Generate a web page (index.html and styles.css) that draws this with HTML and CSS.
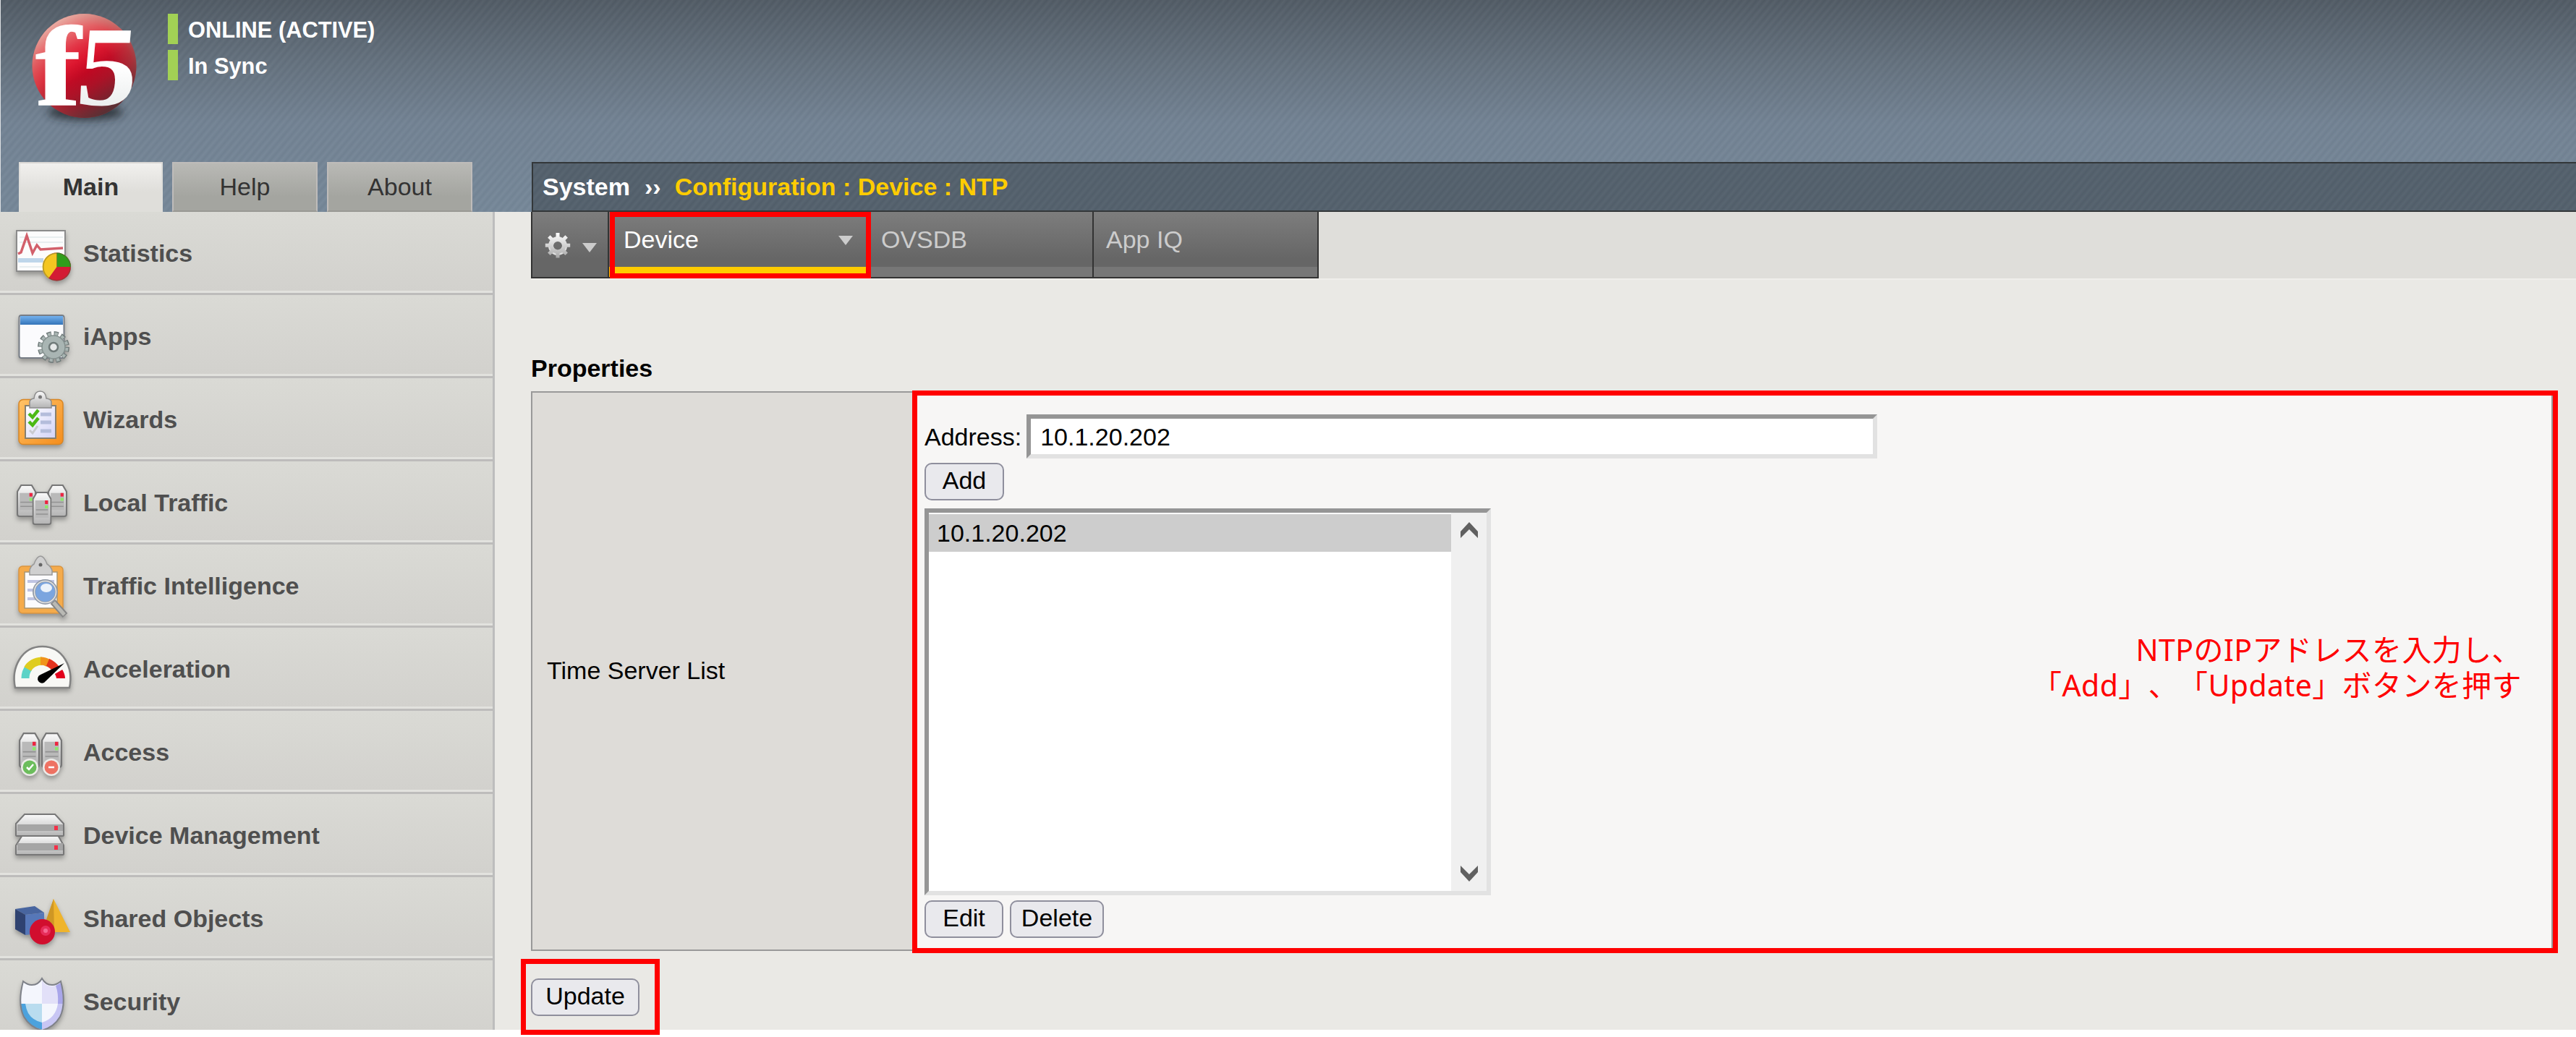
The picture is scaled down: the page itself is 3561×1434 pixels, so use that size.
FILE: index.html
```html
<!DOCTYPE html>
<html lang="ja">
<head>
<meta charset="utf-8">
<title>NTP Configuration</title>
<link rel="stylesheet" href="styles.css">
</head>
<body>
<svg class="defs" width="0" height="0" aria-hidden="true">
  <defs>
    <linearGradient id="metal" x1="0" y1="0" x2="0" y2="1"><stop offset="0" stop-color="#fafafa"/><stop offset="1" stop-color="#b4b4b4"/></linearGradient>
    <linearGradient id="orange" x1="0" y1="0" x2="1" y2="1"><stop offset="0" stop-color="#ffc368"/><stop offset="1" stop-color="#f58d1c"/></linearGradient>
    <linearGradient id="paper" x1="0" y1="0" x2="1" y2="1"><stop offset="0" stop-color="#fff"/><stop offset="1" stop-color="#d2d3f7"/></linearGradient>
    <linearGradient id="blue" x1="0" y1="0" x2="0" y2="1"><stop offset="0" stop-color="#73b1ee"/><stop offset="1" stop-color="#3474b8"/></linearGradient>
    <symbol id="tower" viewBox="0 0 26 46" preserveAspectRatio="none">
      <path d="M1 10 6 1H20L25 10V42Q25 45 22 45H4Q1 45 1 42Z" fill="url(#metal)" stroke="#777" stroke-width="2"/>
      <path d="M4 12h18v24H4z" fill="#b9b9b9"/><path d="M5 25h16M5 31h16" stroke="#929292" stroke-width="1.5"/>
      <path d="M17 12h4v5h-4z" fill="#ed2440"/><path d="M17 19h4v4h-4z" fill="#8be86a"/>
    </symbol>
  </defs>
</svg>
<div class="page">
  <header class="top">
    <div class="brand">
      <svg class="logo" width="232" height="190" viewBox="0 0 232 190">
        <defs>
          <radialGradient id="ball" cx="116" cy="104" r="84" fx="122" fy="100" gradientUnits="userSpaceOnUse"><stop offset="0" stop-color="#d9001f"/><stop offset=".5" stop-color="#d80724"/><stop offset=".82" stop-color="#d32f3c"/><stop offset="1" stop-color="#b06360"/></radialGradient>
          <linearGradient id="shine" x1="70" y1="20" x2="120" y2="100" gradientUnits="userSpaceOnUse"><stop offset="0" stop-color="#ffd9cc" stop-opacity=".85"/><stop offset="1" stop-color="#e55" stop-opacity="0"/></linearGradient>
          <linearGradient id="shade" x1="105" y1="85" x2="150" y2="160" gradientUnits="userSpaceOnUse"><stop offset="0" stop-color="#333" stop-opacity="0"/><stop offset=".45" stop-color="#433" stop-opacity=".3"/><stop offset="1" stop-color="#343434" stop-opacity=".85"/></linearGradient>
          <linearGradient id="glyph" x1="0" y1="0" x2="0" y2="1"><stop offset=".5" stop-color="#fff"/><stop offset="1" stop-color="#dfe4e4"/></linearGradient>
          <filter id="soft" x="-30%" y="-80%" width="160%" height="260%"><feGaussianBlur stdDeviation="6"/></filter>
        </defs>
        <ellipse cx="118" cy="155" rx="52" ry="11" fill="#20262c" opacity=".8" filter="url(#soft)"/>
        <circle cx="116.500" cy="91" r="72" fill="url(#ball)"/>
        <circle cx="116.500" cy="91" r="72" fill="url(#shade)"/>
        <circle cx="116.500" cy="91" r="72" fill="url(#shine)"/>
        <text class="logo-f" transform="translate(49 144.500) scale(1.2 1)">f</text>
        <text class="logo-5" transform="translate(103 144.500) skewX(-5) scale(1.06 1)">5</text>
      </svg>
      <div class="status">
        <div class="status-row">ONLINE (ACTIVE)</div>
        <div class="status-row">In Sync</div>
      </div>
    </div>
    <div class="bar">
      <nav class="tabs">
        <a class="tab tab-on">Main</a>
        <a class="tab">Help</a>
        <a class="tab">About</a>
      </nav>
      <div class="crumbs"><span class="crumb-root">System</span><span class="crumb-sep">››</span><span class="crumb-path">Configuration : Device : NTP</span></div>
    </div>
  </header>

  <div class="body">
    <aside class="menu">
      <a class="item"><svg class="icon" viewBox="0 0 114 110">
        <path d="M23 25h67v56H23z" fill="#fcfcfc" stroke="#8b8b8b" stroke-width="2"/><path d="M25 63h35v6H25z" fill="#bed6ea"/>
        <path d="M27 34h60M27 41h60M27 75h33" stroke="#e8eef0" stroke-width="2"/>
        <path d="m25 57 4-2 8-23 8 24 6-11 5 6 31-2" fill="none" stroke="#d2606b" stroke-width="3.500"/>
        <circle cx="78.500" cy="75" r="19.500" fill="#d31c34"/><path d="M78.500 75V55.500A19.500 19.500 0 0 0 67 91Z" fill="#f4c621"/><path d="M78.500 75V55.500A19.500 19.500 0 0 1 98 75Z" fill="#309e1b"/>
        <circle cx="78.500" cy="75" r="18.800" fill="none" stroke="#553" stroke-opacity=".4" stroke-width="1.500"/>
      </svg>Statistics</a>
      <a class="item"><svg class="icon" viewBox="0 0 114 110">
        <rect x="26.500" y="27" width="62" height="59" rx="3" fill="#fbfbfd" stroke="#777d86" stroke-width="2"/><path d="M28 28h59v12H28z" fill="url(#blue)"/>
        <circle cx="74" cy="71" r="18.500" fill="none" stroke="#6f7a79" stroke-width="7" stroke-dasharray="6 3.690"/><circle cx="74" cy="71" r="17.500" fill="none" stroke="#a9b5b3" stroke-width="6" stroke-dasharray="4 5.163" stroke-dashoffset="-1"/>
        <circle cx="74" cy="71" r="16" fill="#a9b5b3" stroke="#84908e" stroke-width="1.500"/><circle cx="74" cy="71" r="6" fill="#e6e9e9" stroke="#6f7a79" stroke-width="2.500"/>
      </svg>iApps</a>
      <a class="item"><svg class="icon" viewBox="0 0 114 110">
        <rect x="26" y="28.500" width="61" height="62" rx="6" fill="url(#orange)" stroke="#d88624" stroke-width="1.500"/><path d="M35 37h42v45H35z" fill="url(#paper)" stroke="#87806f" stroke-width="2"/>
        <path d="M41 40V32q0-4 6-5 1-10 8.500-10T64 27q7 1 7 5v8z" fill="url(#metal)" stroke="#8c8c8c" stroke-width="1.500"/><circle cx="55.500" cy="25" r="2.500" fill="#777"/>
        <path d="m40 48 5 5 8-10M40 59l5 5 8-10" fill="none" stroke="#4cb916" stroke-width="4.500"/><path d="m41 71 4 4 7-10" fill="none" stroke="#c9cad0" stroke-width="3"/><path d="M56 49h15M56 60h15M56 72h15" stroke="#b4bddb" stroke-width="5"/>
      </svg>Wizards</a>
      <a class="item"><svg class="icon" viewBox="0 0 114 110">
        <use href="#tower" x="23" y="31" width="27" height="45"/><use href="#tower" x="66" y="31" width="27" height="45"/><use href="#tower" x="44.500" y="41" width="27" height="46"/>
      </svg>Local Traffic</a>
      <a class="item"><svg class="icon" viewBox="0 0 114 110">
        <rect x="26" y="29" width="61" height="65" rx="5" fill="#f5ab4b" stroke="#d99541" stroke-width="1.500"/><path d="M34 37h45v50H34z" fill="#fbfbfd" stroke="#a99672" stroke-width="1.500"/>
        <path d="M38 50h37M38 62h37M38 74h37" stroke="#bfc4e2" stroke-width="4"/>
        <path d="M41 41V35q1-6 6-9 4-11 9-11t9 11q5 3 7 9v6z" fill="#d0d0d0" stroke="#999" stroke-width="1.500"/><circle cx="56" cy="27" r="2.500" fill="#666"/>
        <path d="m73 78 17 19" stroke="#858585" stroke-width="9"/><path d="m74 79 15 17" stroke="#b9b9b4" stroke-width="5"/>
        <circle cx="62.500" cy="64.500" r="15.500" fill="#7ba5df" stroke="#929aa6" stroke-width="4"/><circle cx="62.500" cy="64.500" r="15" fill="none" stroke="#e4e4e4" stroke-width="1.500"/><ellipse cx="64" cy="59" rx="8" ry="6" fill="#fff" opacity=".85"/>
      </svg>Traffic Intelligence</a>
      <a class="item"><svg class="icon" viewBox="0 0 114 110">
        <path d="M21 82C15 54 30 25 58.500 25S102 54 96 82Z" fill="#f8f8f5" stroke="#838383" stroke-width="2.500"/>
        <path d="M35 69Q35 60 40 54" fill="none" stroke="#5dd3c7" stroke-width="11"/><path d="M38 56Q44 46 58 45" fill="none" stroke="#dfcc1f" stroke-width="11"/><path d="M56 45Q62 45 67 48" fill="none" stroke="#f0931b" stroke-width="11"/><path d="M66 47Q73 50 78 57" fill="none" stroke="#e2321c" stroke-width="11"/><path d="M81 60Q84 65 84 69" fill="none" stroke="#e2001c" stroke-width="12"/>
        <path d="M89 48 63 73a6 6 0 1 1-7-9Z" fill="#000"/>
      </svg>Acceleration</a>
      <a class="item"><svg class="icon" viewBox="0 0 114 110">
        <use href="#tower" x="26" y="29" width="29" height="49"/><use href="#tower" x="57" y="29" width="29" height="49"/>
        <circle cx="41" cy="77" r="12" fill="#ecebe8"/><circle cx="71" cy="77" r="12" fill="#ecebe8"/><circle cx="41" cy="77" r="9.500" fill="#6cbd5c"/><circle cx="71" cy="77" r="9.500" fill="#ee7263"/>
        <path d="m37 77 3 3 6-7M67 77h8" fill="none" stroke="#fff" stroke-width="2.500"/>
      </svg>Access</a>
      <a class="item"><svg class="icon" viewBox="0 0 114 110">
        <path d="m22 70 9-14h49l8 14v12q0 1-2 1H24q-2 0-2-1z" fill="url(#metal)" stroke="#777" stroke-width="2"/><path d="m22 40 12-13h42l12 13v16q0 1-2 1H24q-2 0-2-1z" fill="url(#metal)" stroke="#777" stroke-width="2"/>
        <path d="M24 41h63v9H24zM24 67h63v10H24z" fill="#a5a5a5"/><path d="M75 43h5v6h-5zM75 70h5v6h-5z" fill="#f33048"/>
      </svg>Device Management</a>
      <a class="item"><svg class="icon" viewBox="0 0 114 110">
        <path d="m74 29 23 46H60z" fill="#efb42c"/><path d="m74 29 1 46H58z" fill="#cf9724"/>
        <path d="m21 43 27-4 13 9-26 3z" fill="#48659f"/><path d="m21 43 14 8v28L21 71z" fill="#2f4270"/><path d="m35 51 26-3v28l-26 3z" fill="#5677b8"/>
        <circle cx="58.500" cy="74.500" r="17.500" fill="#d10e2e"/><circle cx="63" cy="73" r="7" fill="#ef3a6d" opacity=".7"/><circle cx="63" cy="73" r="3" fill="#fa77a0" opacity=".8"/>
      </svg>Shared Objects</a>
      <a class="item"><svg class="icon" viewBox="0 0 114 110">
        <path d="M58 24q5 9 14 9 6 0 12-5 8 31-1 49-8 14-25 19Q41 91 33 77q-9-18-1-49 6 5 12 5 9 0 14-9z" fill="#f4f6fd"/>
        <path d="M58 59v36Q41 91 33 77q-4-8-4-18z" fill="#4ca2dd"/><path d="M58 59v26Q45 82 39 72q-3-6-4-13z" fill="#b9dcef"/>
        <path d="M58 27q5 8 14 8l5-1q5 12 4 25H58z" fill="#e2e0f8"/><path d="m77 34 7-4q4 17 3 29h-7q1-14-3-25z" fill="#a9a6ea"/><path d="M87 59q0 10-4 18-8 14-25 18V85Q77 79 80 59z" fill="#c8c6f4"/>
        <path d="M58 24q5 9 14 9 6 0 12-5 8 31-1 49-8 14-25 19Q41 91 33 77q-9-18-1-49 6 5 12 5 9 0 14-9z" fill="none" stroke="#7e8189" stroke-width="2"/>
      </svg>Security</a>
    </aside>

    <main class="content">
      <div class="strip">
        <div class="strip-gear">
          <svg width="46" height="50" viewBox="0 0 46 50"><defs><linearGradient id="gear" x1="0" y1="0" x2="0" y2="1"><stop offset="0" stop-color="#fff"/><stop offset="1" stop-color="#a8a8a8"/></linearGradient></defs>
            <circle cx="23" cy="25" r="9.500" fill="none" stroke="#dedede" stroke-width="7"/>
            <path fill="url(#gear)" fill-rule="evenodd" d="M20.500 7h5v6l3.700 1.500 4.200-4.200 3.500 3.500-4.200 4.200 1.500 3.700h6v5h-6l-1.500 3.700 4.200 4.200-3.500 3.500-4.200-4.200-3.700 1.500v6h-5v-6l-3.700-1.500-4.200 4.200-3.500-3.500 4.200-4.200-1.500-3.700h-6v-5h6l1.500-3.700-4.200-4.200 3.500-3.500 4.200 4.200 3.700-1.500zM23 18a6.200 6.200 0 1 0 .01 0z"/></svg>
          <i class="caret"></i>
        </div>
        <div class="strip-tab strip-on">Device<i class="caret"></i></div>
        <div class="strip-tab">OVSDB</div>
        <div class="strip-tab">App IQ</div>
      </div>

      <h1 class="heading">Properties</h1>
      <section class="panel">
        <div class="panel-label">Time Server List</div>
        <div class="panel-fields">
          <div class="address">Address:<span class="field">10.1.20.202</span></div>
          <button class="btn btn-add">Add</button>
          <div class="list">
            <div class="options"><div class="option">10.1.20.202</div></div>
            <div class="scroll">
              <svg width="26" height="28" viewBox="0 0 26 28"><path d="M1 17 13 4l12 13v9L13 14 1 26z" fill="#606060"/></svg>
              <svg width="26" height="28" viewBox="0 0 26 28"><path d="M1 11 13 24l12-13V2L13 14 1 2z" fill="#606060"/></svg>
            </div>
          </div>
          <div class="actions"><button class="btn btn-edit">Edit</button><button class="btn btn-delete">Delete</button></div>
        </div>
      </section>
      <button class="btn btn-update">Update</button>
    </main>
  </div>
</div>
<div class="mark mark-tab"></div>
<div class="mark mark-panel"><p class="note">NTPのIPアドレスを入力し、<br>「Add」、「Update」ボタンを押す</p></div>
<div class="mark mark-update"></div>
</body>
</html>
```
FILE: styles.css
```css
* { box-sizing: border-box; }

body {
  margin: 0;
  width: 3561px;
  height: 1434px;
  position: relative;
  overflow: hidden;
  background: #fff;
  color: #000;
  font: 34px/40px "Liberation Sans", Arial, sans-serif;
}

.defs { position: absolute; }

.page {
  height: 1424px;
  overflow: hidden;
  display: flex;
  flex-direction: column;
  background: #eae9e5;
}

/* Header */
.top {
  height: 293px;
  flex: none;
  display: flex;
  flex-direction: column;
  justify-content: space-between;
  background:
    repeating-linear-gradient(130deg, rgba(255, 255, 255, .035) 0, rgba(0, 0, 0, .025) 4px, rgba(255, 255, 255, .035) 8px),
    linear-gradient(#515b65, #64717e 30%, #728293 58%, #758798);
  border-left: 1px solid #dde0e3;
}
.brand { display: flex; height: 190px; }
.logo { flex: none; margin-left: -1px; }
.logo-f, .logo-5 {
  font-family: "Liberation Serif", serif;
  font-weight: bold;
  font-size: 157px;
  fill: #fff;
  stroke: #fff;
  stroke-width: 1.500px;
}
.logo-5 { fill: url(#glyph); stroke: none; }
.status { padding-top: 19px; display: flex; flex-direction: column; gap: 8px; }
.status-row {
  height: 42px;
  border-left: 14px solid #a2d155;
  padding-left: 14px;
  color: #fff;
  font-size: 30.8px;
  font-weight: bold;
  line-height: 45px;
}

.bar { display: flex; height: 69px; }
.tabs { display: flex; gap: 13px; padding-left: 25px; width: 734px; flex: none; }
.tab {
  width: 201px;
  padding-top: 12px;
  text-align: center;
  color: #333;
  background: linear-gradient(#b9b9b5, #a4a5a0 70%);
  border: 2px solid #bfbcba;
  border-bottom-color: #999994;
}
.tab-on {
  width: 199px;
  font-weight: bold;
  background: linear-gradient(#f1f0ee, #dfdeda 60%);
  border-color: #d8d6d3 #dfdeda #dfdeda;
}
.crumbs {
  flex: 1;
  display: flex;
  align-items: center;
  padding: 0 0 2px 13px;
  border: 2px solid #333739;
  border-right: 0;
  background: repeating-linear-gradient(130deg, rgba(255, 255, 255, .03) 0, rgba(0, 0, 0, .02) 4px, rgba(255, 255, 255, .03) 8px), #53606c;
  color: #fff;
  font-weight: bold;
}
.crumb-sep { margin: 0 19px 0 20px; }
.crumb-path { color: #fc0; }

/* Sidebar */
.body { flex: 1; display: flex; min-height: 0; }
.menu { width: 684px; flex: none; border-right: 3px solid #bdbdbd; overflow: hidden; }
.item {
  display: flex;
  align-items: center;
  height: 115px;
  padding-top: 1px;
  background: linear-gradient(#dadad5, #d2d1cd);
  border-bottom: 3px solid #bdbcbb;
  box-shadow: inset 0 -3px #e2e2de;
  color: #4f4f4f;
  font-weight: bold;
}
.icon { width: 114px; height: 110px; flex: none; margin: 0 1px 2px 0; filter: drop-shadow(0 4px 3px rgba(0, 0, 0, .3)); }

/* Content */
.content { flex: 1; padding-left: 50px; }
.strip { display: flex; height: 92px; background: #dfdeda; box-shadow: 0 2px #efeeeb; }
.strip-gear, .strip-tab {
  border-right: 2px solid #333;
  border-bottom: 2px solid #333;
  background: linear-gradient(#7d7d7d, #666 72%);
}
.strip-gear { width: 108px; border-left: 2px solid #333; display: flex; align-items: center; padding: 3px 0 0 12px; gap: 11px; }
.strip-gear .caret { margin-top: 6px; }
.caret { width: 0; height: 0; border: 10.5px solid transparent; border-top: 13px solid #ccc; border-bottom: 0; }
.strip-tab {
  width: 311px;
  display: flex;
  justify-content: space-between;
  padding: 18px 20px 0 17px;
  color: #ccc;
  box-shadow: inset 0 -14px #777;
}
.strip-on { width: 359px; padding-left: 20px; color: #fff; box-shadow: inset 0 -14px #fc0; }
.strip-on .caret { margin-top: 15px; }

.heading { margin: 104px 0 12px; font-size: 34px; line-height: 40px; }
.panel { display: flex; height: 774px; width: 2795px; border: 2px solid #999; background: #f7f6f5; }
.panel-label { width: 526px; flex: none; display: flex; align-items: center; padding: 0 0 2px 20px; background: #dedcd8; }
.panel-fields { flex: 1; padding: 30px 0 0 16px; }
.address { display: flex; align-items: center; height: 61px; gap: 7px; }
.field {
  width: 1176px;
  height: 61px;
  padding-left: 13px;
  border: 6px solid;
  border-color: #959595 #e2e2e2 #e2e2e2 #959595;
  background: #fff;
  line-height: 50px;
}
.btn {
  display: block;
  height: 52px;
  padding: 0 0 3px;
  border: 2px solid #8f8f9d;
  border-radius: 10px;
  background: #e9e9ed;
  color: #000;
  font: 34px/45px "Liberation Sans", Arial, sans-serif;
}
.btn-add { width: 110px; margin: 6px 0 11px; }
.list {
  display: flex;
  width: 783px;
  height: 535px;
  border: 6px solid;
  border-color: #959595 #e2e2e2 #e2e2e2 #959595;
  background: #fff;
}
.options { flex: 1; padding-top: 2px; }
.option { height: 52px; padding-left: 11px; background: #cdcdcd; line-height: 52px; }
.scroll { width: 49px; display: flex; flex-direction: column; justify-content: space-between; align-items: center; padding: 9px 0; background: #f0f0f0; }
.actions { display: flex; gap: 9px; margin-top: 7px; }
.btn-edit { width: 109px; }
.btn-delete { width: 130px; }
.btn-update { width: 150px; margin-top: 38px; }

/* Annotations laid over the screen */
.mark { position: absolute; border: 7px solid #f00; }
.mark-tab { left: 843px; top: 293px; width: 361px; height: 92px; }
.mark-panel { left: 1261px; top: 540px; width: 2275px; height: 778px; }
.mark-update { left: 720px; top: 1326px; width: 192px; height: 105px; }
.note {
  margin: 327px 43px 0 0;
  color: #f00;
  text-align: right;
  font: 41px/49px "Noto Sans", "Noto Sans CJK JP", sans-serif;
  letter-spacing: .4px;
  text-spacing-trim: space-all;
}
```
